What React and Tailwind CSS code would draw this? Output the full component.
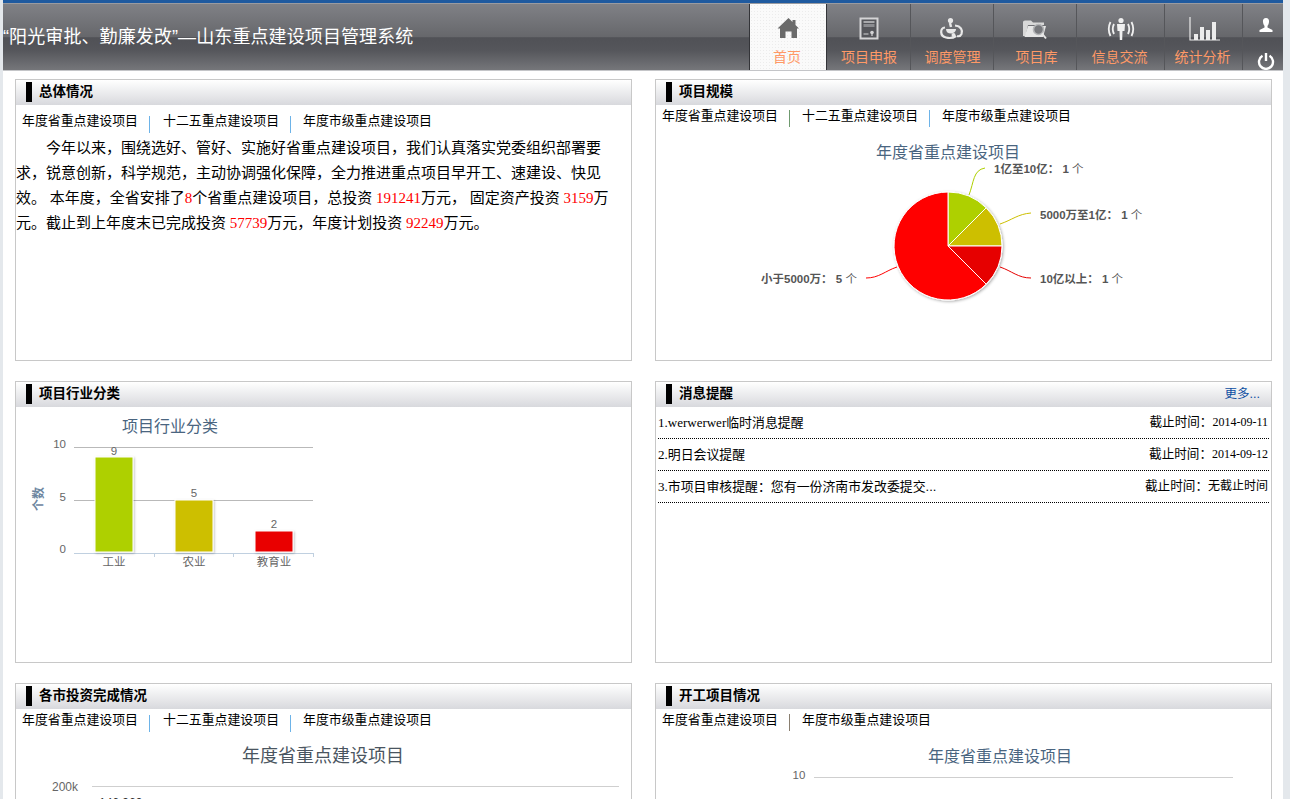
const serif = "font-['Liberation_Serif','Noto_Sans_CJK_SC',serif]";
const sans = "font-['Liberation_Sans','Noto_Sans_CJK_SC',sans-serif]";

function Icon({ children, w = 30, h = 26 }) {
  return (
    <svg width={w} height={h} viewBox={`0 0 ${w} ${h}`} className="block">
      {children}
    </svg>
  );
}

const icons = {
  home: (
    <Icon>
      <path d="M15.5 1 L4.5 11.5 L7 11.5 L7 21 L12.5 21 L12.5 14.5 L18.5 14.5 L18.5 21 L24 21 L24 11.5 L26 11.5 L22.5 8 L22.5 3 L19.5 3 L19.5 5 Z" fill="#6a6a6a" />
    </Icon>
  ),
  cert: (
    <Icon>
      <rect x="6.5" y="1.5" width="17" height="20" fill="#55565b" stroke="#d4d4d6" strokeWidth="2" />
      <rect x="9.5" y="4" width="11" height="2" fill="#a8a9ac" />
      <rect x="9.5" y="7" width="11" height="3" fill="#8b8c90" />
      <rect x="9.5" y="16.5" width="5" height="1" fill="#d4d4d6" />
      <circle cx="18" cy="15.5" r="1.8" fill="#d4d4d6" />
      <rect x="17.4" y="16" width="1.2" height="3" fill="#d4d4d6" />
    </Icon>
  ),
  dispatch: (
    <Icon>
      <circle cx="13.5" cy="3.5" r="2.6" fill="#e8e8e8" />
      <path d="M13 6 L14 10" stroke="#e8e8e8" strokeWidth="2.5" />
      <path d="M8 10.5 C3 11 2.5 19 9 20.5 C13 21.5 17 20.5 19 19" fill="none" stroke="#e8e8e8" strokeWidth="2.2" />
      <path d="M18 8.5 C24 9 26 13.5 24.5 17 C23.5 19 21.5 19.5 20 19" fill="none" stroke="#e8e8e8" strokeWidth="2.2" />
      <path d="M9 12 H19 C19 15 16 16.5 14 16.5 C11 16.5 9 15 9 12 Z" fill="#e8e8e8" />
      <circle cx="16.5" cy="18" r="2" fill="#e8e8e8" />
    </Icon>
  ),
  folder: (
    <Icon>
      <path d="M3 5 Q3 3.5 5 3.5 L11 3.5 L13 5.5 L24 5.5 L24 8 L8 8 L5.5 19 L3 19 Z" fill="#d8d8d8" />
      <path d="M8 9 L26 9 L23 20 L4.5 20 Z" fill="#e6e6e6" />
      <circle cx="18.5" cy="12.5" r="5" fill="#77787c" stroke="#b5b6b8" strokeWidth="1.6" />
      <path d="M22 16.5 L26 21.5" stroke="#e6e6e6" strokeWidth="2" />
    </Icon>
  ),
  signal: (
    <Icon>
      <circle cx="15" cy="3.5" r="2.6" fill="#f0f0f0" />
      <path d="M11 7 L19 7 L18.5 14 L16.5 14 L16.2 23 L13.8 23 L13.5 14 L11.5 14 Z" fill="#f0f0f0" />
      <path d="M8 7 Q5.5 12 8 17 M22 7 Q24.5 12 22 17" fill="none" stroke="#f0f0f0" strokeWidth="1.8" />
      <path d="M4.5 5 Q1 12 4.5 19 M25.5 5 Q29 12 25.5 19" fill="none" stroke="#f0f0f0" strokeWidth="1.8" />
    </Icon>
  ),
  bars: (
    <Icon w={34} h={26}>
      <path d="M3 0 V23 H33" fill="none" stroke="#ececec" strokeWidth="1.2" />
      <rect x="7" y="17" width="4" height="6" fill="#ececec" />
      <rect x="13" y="10" width="4" height="13" fill="#ececec" />
      <rect x="19" y="13" width="4" height="10" fill="#ececec" />
      <rect x="25" y="5" width="4" height="18" fill="#ececec" />
    </Icon>
  ),
};

const navItems = [
  ["项目申报", "w-[84px]", "cert", "ml-[1px]"],
  ["调度管理", "w-[83px]", "dispatch", "ml-[1px]"],
  ["项目库", "w-[83px]", "folder", "ml-[3px]"],
  ["信息交流", "w-[88px]", "signal", "mr-[2px]"],
  ["统计分析", "w-[78px]", "bars", "mr-[2px]"],
];

function Header() {
  return (
    <header className="flex h-[68px] justify-between border-t border-t-[#9a9ba0] border-b border-b-[#c4c5c8] bg-[linear-gradient(#808186_0%,#66676b_50%,#505156_51%,#55565b_70%,#75767a_100%)]">
      <div className={`${sans} pt-[20px] text-[18px] leading-[26px] tracking-[0.1px] text-white`}>
        “阳光审批、勤廉发改”—山东重点建设项目管理系统
      </div>
      <nav className={`${sans} flex`}>
        <div className="flex w-[78px] flex-col items-center border-x border-x-[#333438] bg-[#fafafa] bg-[radial-gradient(#ececec_1px,transparent_1px)] bg-[length:3px_3px]">
          <div className="mt-[13px]">{icons.home}</div>
          <div className="mr-[2px] mt-[4px] text-[14px] leading-[20px] text-[#ff9966]">首页</div>
        </div>
        {navItems.map(([label, width, icon, shift]) => (
          <div key={label} className={`flex ${width} flex-col items-center border-r border-r-[#55565a]`}>
            <div className="mt-[13px]">{icons[icon]}</div>
            <div className={`${shift} mt-[4px] text-[14px] leading-[20px] text-[#ff9966]`}>{label}</div>
          </div>
        ))}
        <div className="flex w-[40px] flex-col items-center pl-[6px]">
          <svg width="16" height="16" viewBox="0 0 16 16" className="mt-[13px] block">
            <path d="M8 1 C5.5 1 4.8 3 5 5 C5.1 7 6 8 6.5 9 L6.5 10.5 L1.5 13 L1.5 15 L14.5 15 L14.5 13 L9.5 10.5 L9.5 9 C10 8 10.9 7 11 5 C11.2 3 10.5 1 8 1 Z" fill="#fff" />
          </svg>
          <svg width="18" height="18" viewBox="0 0 18 18" className="mt-[19px] block">
            <path d="M5.5 3.8 A7 7 0 1 0 12.5 3.8" fill="none" stroke="#fff" strokeWidth="2.4" />
            <path d="M9 1 V9" stroke="#fff" strokeWidth="2.4" />
          </svg>
        </div>
      </nav>
    </header>
  );
}

function Card({ title, more, children }) {
  return (
    <section className="h-[282px] overflow-hidden border border-[#c8c8c8] bg-white">
      <div className="flex h-[25px] justify-between bg-[linear-gradient(#ffffff,#d8d9dd)]">
        <div className="flex">
          <span className="ml-[10px] mt-[2px] h-[20px] w-[6px] bg-black" />
          <h2 className={`${sans} ml-[7px] text-[13.5px] font-bold leading-[23px] text-black`}>{title}</h2>
        </div>
        {more && (
          <a className={`${sans} mr-[11px] text-[12.5px] leading-[24px] text-[#0b4ea2]`}>{more}</a>
        )}
      </div>
      {children}
    </section>
  );
}

const T3 = ["年度省重点建设项目", "十二五重点建设项目", "年度市级重点建设项目"];
const red = "text-[#ff0000]";

function Overview() {
  return (
    <>
      <div className={`${sans} flex h-[31px] items-start pl-[6px] pt-[6px] text-[12.9px] leading-[20px] text-black`}>
        <span>年度省重点建设项目</span>
        <span className="ml-[11px] mr-[13px] mt-[5px] h-[17px] w-[1px] bg-[#6db3e8]" />
        <span>十二五重点建设项目</span>
        <span className="ml-[11px] mr-[12px] mt-[5px] h-[17px] w-[1px] bg-[#6db3e8]" />
        <span>年度市级重点建设项目</span>
      </div>
      <p className={`${serif} w-[596px] indent-[30px] text-[15px] leading-[25px] text-black`}>
        今年以来，围绕选好、管好、实施好省重点建设项目，我们认真落实党委组织部署要求，锐意创新，科学规范，主动协调强化保障，全力推进重点项目早开工、速建设、快见效。 本年度，全省安排了<span className={red}>8</span>个省重点建设项目，总投资 <span className={red}>191241</span>万元， 固定资产投资 <span className={red}>3159</span>万元。截止到上年度末已完成投资 <span className={red}>57739</span>万元，年度计划投资 <span className={red}>92249</span>万元。
      </p>
    </>
  );
}

const chartTitle = `${sans} fill-[#4a6580] text-[16px]`;
const axisText = `${sans} fill-[#666666] text-[11.5px]`;
const pieText = `${sans} fill-[#555555] text-[11.5px] font-bold`;

function PieChart() {
  const lab = (x, y, a, b) => (
    <text x={x} y={y} className={pieText}>
      {a}： {b} <tspan className="font-normal">个</tspan>
    </text>
  );
  return (
    <svg viewBox="656 130 615 230" className="block h-[230px] w-[615px]">
      <defs>
        <filter id="ps" x="-20%" y="-20%" width="140%" height="140%">
          <feDropShadow dx="1" dy="1" stdDeviation="1.5" floodColor="#000" floodOpacity="0.35" />
        </filter>
      </defs>
      <text x="948" y="158" textAnchor="middle" className={chartTitle}>年度省重点建设项目</text>
      <g filter="url(#ps)">
        <circle cx="948" cy="246" r="54.5" fill="#fff" />
      </g>
      <g stroke="#fff" strokeWidth="1" strokeLinejoin="round">
        <path d="M948 246 L948 192 A54 54 0 0 1 986.2 207.8 Z" fill="#aed000" />
        <path d="M948 246 L986.2 207.8 A54 54 0 0 1 1002 246 Z" fill="#cdbf00" />
        <path d="M948 246 L1002 246 A54 54 0 0 1 986.2 284.2 Z" fill="#e60000" />
        <path d="M948 246 L986.2 284.2 A54 54 0 1 1 948 192 Z" fill="#ff0000" />
      </g>
      <path d="M969 195 C974 182 973 170 985 168" fill="none" stroke="#aed000" />
      <path d="M1000 224 C1012 220 1018 214 1031 213" fill="none" stroke="#cdbf00" />
      <path d="M1000 267 C1012 271 1018 278 1031 278" fill="none" stroke="#e60000" />
      <path d="M897 267 C885 271 879 278 866 278" fill="none" stroke="#ff0000" />
      {lab(994, 173, "1亿至10亿", "1")}
      {lab(1040, 219, "5000万至1亿", "1")}
      {lab(1040, 283, "10亿以上", "1")}
      {lab(761, 283, "小于5000万", "5")}
    </svg>
  );
}

function BarChart() {
  const bars = [
    [95, 457, 95, "#aed000", 114, 455, "9", "工业"],
    [175, 500, 52, "#cdbf00", 194, 497, "5", "农业"],
    [255, 531, 21, "#e90000", 274, 528, "2", "教育业"],
  ];
  return (
    <svg viewBox="16 407 615 255" className="block h-[255px] w-[615px]">
      <defs>
        <filter id="bs" x="-15%" y="-15%" width="130%" height="130%">
          <feDropShadow dx="1" dy="1" stdDeviation="0.8" floodColor="#000" floodOpacity="0.25" />
        </filter>
      </defs>
      <text x="170" y="432" textAnchor="middle" className={chartTitle}>项目行业分类</text>
      <path d="M74 447.5 H313 M74 500.5 H313" stroke="#b9b9b9" />
      <path d="M74 553.5 H314 M154.5 553 V557 M233.5 553 V557 M313.5 553 V557" stroke="#c0d0e0" />
      <text x="66" y="448" textAnchor="end" className={axisText}>10</text>
      <text x="66" y="501" textAnchor="end" className={axisText}>5</text>
      <text x="66" y="553" textAnchor="end" className={axisText}>0</text>
      <text x="43" y="499" textAnchor="middle" transform="rotate(-90 43 499)" className={`${sans} fill-[#6d869f] text-[12px] font-bold`}>个数</text>
      {bars.map(([x, y, h, c, tx, ty, v, name]) => (
        <g key={name}>
          <rect x={x} y={y} width="38" height={h} fill={c} stroke="#fff" filter="url(#bs)" />
          <text x={tx} y={ty} textAnchor="middle" className={axisText}>{v}</text>
          <text x={tx} y="566" textAnchor="middle" className={axisText}>{name}</text>
        </g>
      ))}
    </svg>
  );
}

const messages = [
  ["1.", "werwerwer", "临时消息提醒", "2014-09-11", false],
  ["2.", "", "明日会议提醒", "2014-09-12", false],
  ["3.", "", "市项目审核提醒：您有一份济南市发改委提交...", "无截止时间", true],
];

function Messages() {
  return (
    <div className="px-[2px]">
      {messages.map(([n, en, text, date, cjk]) => (
        <div key={n} className={`${serif} flex h-[32px] items-center justify-between border-b border-dotted border-b-black pr-[1px] text-[13px] text-black`}>
          <span>
            <span>{n}{en}</span>
            <span className={`${sans} text-[12.9px]`}>{text}</span>
          </span>
          <span className="flex items-center">
            <span className={`${sans} text-[12.6px]`}>截止时间：</span>
            <span className={cjk ? `${sans} text-[12px]` : "text-[12px]"}>{date}</span>
          </span>
        </div>
      ))}
    </div>
  );
}

function InvestChart() {
  return (
    <svg viewBox="16 734 615 66" className="block h-[66px] w-[615px]">
      <text x="323" y="762" textAnchor="middle" className={`${sans} fill-[#4a5560] text-[18px]`}>年度省重点建设项目</text>
      <text x="52" y="791" className={`${sans} fill-[#666666] text-[12px]`}>200k</text>
      <path d="M92 786.5 H619" stroke="#cfcfcf" />
      <text x="99" y="807" className={`${sans} fill-[#333333] text-[12px]`}>146,969</text>
    </svg>
  );
}

function StartChart() {
  return (
    <svg viewBox="656 734 615 66" className="block h-[66px] w-[615px]">
      <text x="1000" y="762" textAnchor="middle" className={chartTitle}>年度省重点建设项目</text>
      <text x="799" y="779" textAnchor="middle" className={axisText}>10</text>
      <path d="M814 777.5 H1233" stroke="#cfcfcf" />
    </svg>
  );
}

function TabsLeft() {
  return (
    <div className={`${sans} flex h-[25px] items-start pl-[6px] pt-[1px] text-[12.9px] leading-[20px] text-black`}>
      <span>年度省重点建设项目</span>
      <span className="ml-[11px] mr-[13px] mt-[5px] h-[17px] w-[1px] bg-[#6db3e8]" />
      <span>十二五重点建设项目</span>
      <span className="ml-[11px] mr-[12px] mt-[5px] h-[17px] w-[1px] bg-[#6db3e8]" />
      <span>年度市级重点建设项目</span>
    </div>
  );
}

function TabsRight({ items, seps }) {
  return (
    <div className={`${sans} flex h-[25px] items-start pl-[6px] pt-[1px] text-[12.9px] leading-[20px] text-black`}>
      {items.map((t, i) => (
        <div key={t} className="flex items-start">
          <span>{t}</span>
          {i < items.length - 1 && (
            <span className={`ml-[11px] mr-[12px] mt-[4px] h-[17px] w-[1px] ${seps[i]}`} />
          )}
        </div>
      ))}
    </div>
  );
}

export default function App() {
  return (
    <div className="h-[799px] overflow-hidden bg-[#e4e8ec] pl-[3px] pr-[7px]">
      <div className="h-full bg-white">
        <div className="h-[3px] bg-[#1f5a9f]" />
        <Header />
        <main className="grid grid-cols-[617px_617px] gap-x-[23px] gap-y-[20px] pl-[12px] pt-[8px]">
          <Card title="总体情况"><Overview /></Card>
          <Card title="项目规模">
            <TabsRight items={T3} seps={["bg-[#6f9a6f]", "bg-[#6db3e8]"]} />
            <PieChart />
          </Card>
          <Card title="项目行业分类"><BarChart /></Card>
          <Card title="消息提醒" more="更多..."><Messages /></Card>
          <Card title="各市投资完成情况">
            <TabsLeft />
            <InvestChart />
          </Card>
          <Card title="开工项目情况">
            <TabsRight items={["年度省重点建设项目", "年度市级重点建设项目"]} seps={["bg-[#8a7f70]"]} />
            <StartChart />
          </Card>
        </main>
      </div>
    </div>
  );
}
